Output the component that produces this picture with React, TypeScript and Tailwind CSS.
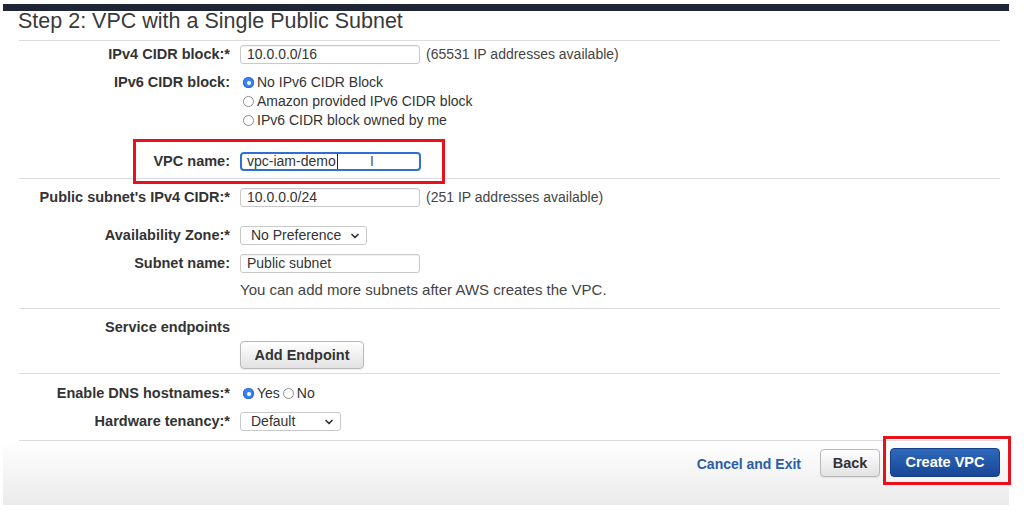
import { ChevronDown } from "lucide-react";
import type { ReactNode } from "react";

const font = { fontFamily: '"Liberation Sans", Arial, Helvetica, sans-serif' };

function Row({ label, children, className = "" }: { label?: string; children: ReactNode; className?: string }) {
  return (
    <div className={`relative grid grid-cols-[227px_1fr] items-center gap-x-[10px] ${className}`}>
      <div className="whitespace-nowrap text-right text-[14.5px] font-bold text-[#333]">{label}</div>
      <div className="flex items-center">{children}</div>
    </div>
  );
}

function TextBox({ value, width = "w-[180px]" }: { value: string; width?: string }) {
  return (
    <div
      className={`flex h-[19px] ${width} items-center rounded-[3px] border border-[#c9c9c9] bg-white px-[6px] text-[14px] text-[#333] shadow-[inset_0_1px_1px_rgba(0,0,0,0.06)]`}
    >
      {value}
    </div>
  );
}

function SelectBox({ value, width }: { value: string; width: string }) {
  return (
    <div
      className={`flex h-[19px] ${width} items-center justify-between rounded-[3px] border border-[#c9c9c9] bg-white pl-[10px] pr-[5px] text-[14px] text-[#333]`}
    >
      <span>{value}</span>
      <ChevronDown className="size-[12px] text-[#333]" strokeWidth={3.5} />
    </div>
  );
}

function Radio({ checked, label }: { checked?: boolean; label: string }) {
  return (
    <span className="flex items-center gap-[3px] text-[14px] text-[#333]">
      {checked ? (
        <span className="flex size-[11px] items-center justify-center rounded-full bg-[#3b82f0] shadow-[inset_0_0_0_1px_#2a6ad6]">
          <span className="size-[4px] rounded-full bg-white" />
        </span>
      ) : (
        <span className="size-[11px] rounded-full border border-[#8f8f8f] bg-white" />
      )}
      {label}
    </span>
  );
}

function Divider() {
  return <div className="ml-[16px] h-px w-[981px] bg-[#dcdcdc]" />;
}

function GrayButton({ children, className = "" }: { children: ReactNode; className?: string }) {
  return (
    <button
      className={`flex items-center justify-center rounded-[4px] border border-[#b9b9b9] bg-gradient-to-b from-[#ffffff] to-[#e2e2e2] text-[14.5px] font-bold text-[#333] shadow-[0_1px_1px_rgba(0,0,0,0.08)] ${className}`}
    >
      {children}
    </button>
  );
}

export default function App() {
  return (
    <div className="min-h-[515px] w-[1024px] bg-white leading-[19px]" style={font}>
      <div className="ml-[3px] w-[1006px] pt-[4px]">
        <div className="h-[7px] bg-[#1f2534]" />

        <div className="h-[29px] pl-[15px] text-[21.5px] leading-[20px] text-[#3a3a3a]">
          Step 2: VPC with a Single Public Subnet
        </div>
        <Divider />

        <Row label="IPv4 CIDR block:*" className="mt-[4px]">
          <TextBox value="10.0.0.0/16" />
          <span className="ml-[6px] text-[14px] text-[#444]">(65531 IP addresses available)</span>
        </Row>

        <div className="mt-[9px] grid grid-cols-[227px_1fr] gap-x-[10px]">
          <div className="flex h-[19px] items-center justify-end text-[14.5px] font-bold text-[#333]">IPv6 CIDR block:</div>
          <div className="flex flex-col pl-[3px]">
            <div className="flex h-[19px] items-center">
              <Radio checked label="No IPv6 CIDR Block" />
            </div>
            <div className="flex h-[19px] items-center">
              <Radio label="Amazon provided IPv6 CIDR block" />
            </div>
            <div className="flex h-[19px] items-center">
              <Radio label="IPv6 CIDR block owned by me" />
            </div>
          </div>
        </div>

        <Row label="VPC name:" className="mb-[7px] mt-[22px]">
          <div className="relative flex h-[19px] w-[181px] items-center rounded-[4px] border-2 border-[#2f6fd0] bg-white px-[5px] text-[14px] text-[#333]">
            vpc-iam-demo
            <span className="ml-px h-[15px] w-px bg-[#222]" />
            <span className="absolute left-[128px] top-[-2px] text-[14px] font-light text-[#555]">I</span>
          </div>
          <div className="pointer-events-none absolute left-[130px] top-[-13px] h-[45px] w-[312px] border-[3px] border-[#e8101a]" />
        </Row>
        <Divider />

        <Row label="Public subnet's IPv4 CIDR:*" className="mt-[9px]">
          <TextBox value="10.0.0.0/24" />
          <span className="ml-[6px] text-[14px] text-[#444]">(251 IP addresses available)</span>
        </Row>

        <Row label="Availability Zone:*" className="mt-[19px]">
          <SelectBox value="No Preference" width="w-[127px]" />
        </Row>

        <Row label="Subnet name:" className="mt-[9px]">
          <TextBox value="Public subnet" />
        </Row>

        <Row className="mb-[10px] mt-[7px] h-[18px]">
          <span className="whitespace-nowrap text-[15px] text-[#444]">You can add more subnets after AWS creates the VPC.</span>
        </Row>
        <Divider />

        <Row label="Service endpoints" className="mt-[9px] h-[18px]">
          <span />
        </Row>
        <Row className="mb-[4px] mt-[5px]">
          <GrayButton className="h-[28px] w-[124px]">Add Endpoint</GrayButton>
        </Row>
        <Divider />

        <Row label="Enable DNS hostnames:*" className="mt-[10px] h-[19px]">
          <div className="flex items-center gap-[3px] pl-[3px]">
            <Radio checked label="Yes" />
            <Radio label="No" />
          </div>
        </Row>

        <Row label="Hardware tenancy:*" className="mb-[9px] mt-[9px]">
          <SelectBox value="Default" width="w-[101px]" />
        </Row>
        <Divider />

        <div className="flex h-[64px] items-start justify-end bg-gradient-to-b from-[#ffffff] to-[#ebebeb] pr-[9px] pt-[7px]">
          <a className="mr-[19px] mt-[7px] text-[14px] font-bold text-[#2b5ea8]">Cancel and Exit</a>
          <GrayButton className="mt-px h-[28px] w-[60px]">Back</GrayButton>
          <div className="relative ml-[10px]">
            <button className="flex h-[29px] w-[110px] items-center justify-center rounded-[4px] border border-[#16418a] bg-gradient-to-b from-[#2f69bd] to-[#174694] text-[14.5px] font-bold text-white">
              Create VPC
            </button>
            <div className="pointer-events-none absolute left-[-7px] top-[-12px] h-[49px] w-[128px] border-[3px] border-[#e8101a]" />
          </div>
        </div>
      </div>
    </div>
  );
}
